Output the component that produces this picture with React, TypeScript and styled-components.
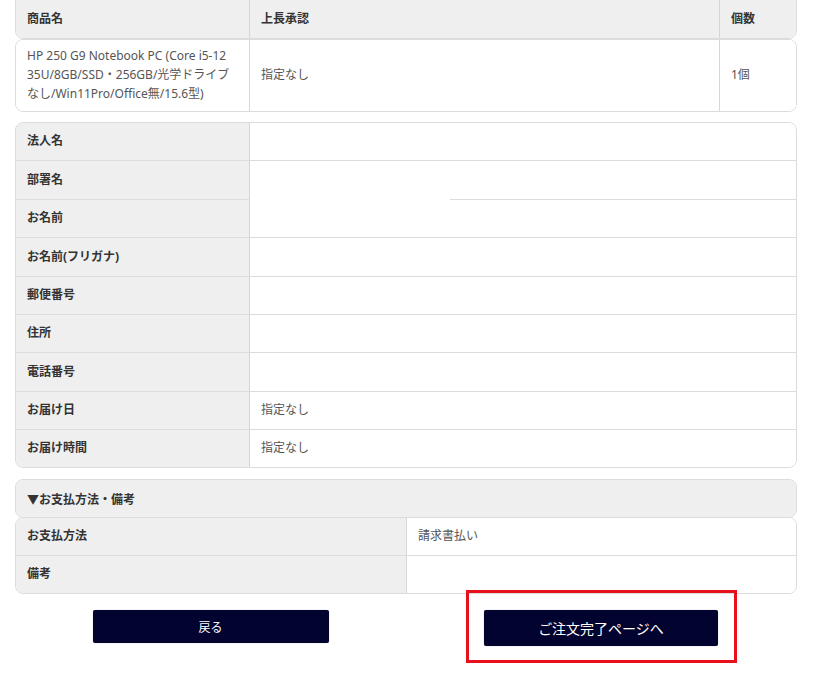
import React from "react";
import styled, { createGlobalStyle } from "styled-components";

const GlobalStyle = createGlobalStyle`
  html, body {
    margin: 0;
    padding: 0;
    background: #ffffff;
    overflow: hidden;
  }
  body {
    font-family: "Noto Sans", "Noto Sans CJK JP", sans-serif;
    font-size: 12px;
    color: #333333;
  }
`;

const Page = styled.div`
  width: 782px;
  margin-left: 15px;
  display: flex;
  flex-direction: column;
`;

const Box = styled.div<{ $mt?: number }>`
  border: 1px solid #dcdcdc;
  border-radius: 8px;
  overflow: hidden;
  margin-top: ${(p) => p.$mt ?? 0}px;
  background: #ffffff;
`;

const Grid = styled.div<{ $cols: string }>`
  display: grid;
  grid-template-columns: ${(p) => p.$cols};
`;

const Cell = styled.div<{
  $head?: boolean;
  $h?: number;
  $padTop?: number;
  $last?: boolean;
  $bottom?: boolean;
}>`
  display: flex;
  align-items: center;
  box-sizing: border-box;
  min-height: ${(p) => p.$h ?? 37}px;
  padding: ${(p) => p.$padTop ?? 0}px 11px 0 11px;
  background: ${(p) => (p.$head ? "#efefef" : "#ffffff")};
  font-weight: ${(p) => (p.$head ? 700 : 400)};
  color: ${(p) => (p.$head ? "#333333" : "#555555")};
  border-right: ${(p) => (p.$last ? "none" : "1px solid #d6d6d6")};
  border-bottom: ${(p) => (p.$bottom ? "1px solid #dcdcdc" : "none")};
  line-height: 18.7px;
`;

const Merged = styled.div`
  grid-row: span 2;
  display: flex;
  flex-direction: column;
  border-bottom: 1px solid #dcdcdc;
`;

const Half = styled.div<{ $line?: boolean }>`
  flex: 1;
  margin-left: ${(p) => (p.$line ? 200 : 0)}px;
  border-top: ${(p) => (p.$line ? "1px solid #dcdcdc" : "none")};
`;

const SectionHead = styled.div`
  display: flex;
  align-items: center;
  height: 37px;
  padding-left: 11px;
  background: #efefef;
  font-weight: 700;
  color: #333333;
`;

const ButtonRow = styled.div`
  display: grid;
  grid-template-columns: 1fr 1fr;
  align-items: start;
`;

const ButtonCell = styled.div`
  display: flex;
  justify-content: center;
`;

const NavButton = styled.button<{ $w: number; $h: number; $fs: number; $mt?: number }>`
  width: ${(p) => p.$w}px;
  height: ${(p) => p.$h}px;
  margin-top: ${(p) => p.$mt ?? 0}px;
  background: #03032f;
  color: #ffffff;
  border: none;
  border-radius: 2px;
  font-family: "Noto Sans CJK JP", sans-serif;
  font-size: ${(p) => p.$fs}px;
  cursor: pointer;
  box-shadow: 0 0 1px rgba(0, 0, 0, 0.4);
`;

const Highlight = styled.div`
  margin-top: -4px;
  border: 3px solid #e8111b;
  padding: 17px 16px 14px 15px;
  display: flex;
`;

const rows2: { label: string; value?: string }[] = [
  { label: "郵便番号" },
  { label: "住所" },
  { label: "電話番号" },
  { label: "お届け日", value: "指定なし" },
];

const ROW = 38.4;

export default function App() {
  return (
    <>
      <GlobalStyle />
      <Page>
        <Box $mt={-8}>
          <Grid $cols="234px 470px 1fr">
            <Cell $head $h={45} $padTop={7}>商品名</Cell>
            <Cell $head $h={45} $padTop={7}>上長承認</Cell>
            <Cell $head $h={45} $padTop={7} $last>個数</Cell>
          </Grid>
        </Box>
        <Box>
          <Grid $cols="234px 470px 1fr">
            <Cell $h={71}>
              HP 250 G9 Notebook PC (Core i5-12
              <br />
              35U/8GB/SSD・256GB/光学ドライブ
              <br />
              なし/Win11Pro/Office無/15.6型)
            </Cell>
            <Cell $h={71}>指定なし</Cell>
            <Cell $h={71} $last>1個</Cell>
          </Grid>
        </Box>

        <Box $mt={10}>
          <Grid $cols="234px 1fr">
            <Cell $head $bottom $h={ROW}>法人名</Cell>
            <Cell $last $bottom $h={ROW} />
            <Cell $head $bottom $h={ROW}>部署名</Cell>
            <Merged>
              <Half />
              <Half $line />
            </Merged>
            <Cell $head $bottom $h={ROW}>お名前</Cell>
            <Cell $head $bottom $h={ROW}>お名前(フリガナ)</Cell>
            <Cell $last $bottom $h={ROW} />
            {rows2.map((r) => (
              <React.Fragment key={r.label}>
                <Cell $head $bottom $h={ROW}>{r.label}</Cell>
                <Cell $last $bottom $h={ROW}>{r.value ?? ""}</Cell>
              </React.Fragment>
            ))}
            <Cell $head $h={37}>お届け時間</Cell>
            <Cell $last $h={37}>指定なし</Cell>
          </Grid>
        </Box>

        <Box $mt={11}>
          <SectionHead>▼お支払方法・備考</SectionHead>
        </Box>
        <Box $mt={-1}>
          <Grid $cols="391px 1fr">
            <Cell $head $bottom $h={38}>お支払方法</Cell>
            <Cell $last $bottom $h={38}>請求書払い</Cell>
            <Cell $head $h={37}>備考</Cell>
            <Cell $last $h={37} />
          </Grid>
        </Box>

        <ButtonRow>
          <ButtonCell>
            <NavButton $w={236} $h={33} $fs={12} $mt={16}>戻る</NavButton>
          </ButtonCell>
          <ButtonCell>
            <Highlight>
              <NavButton $w={234} $h={36} $fs={14}>ご注文完了ページへ</NavButton>
            </Highlight>
          </ButtonCell>
        </ButtonRow>
      </Page>
    </>
  );
}
